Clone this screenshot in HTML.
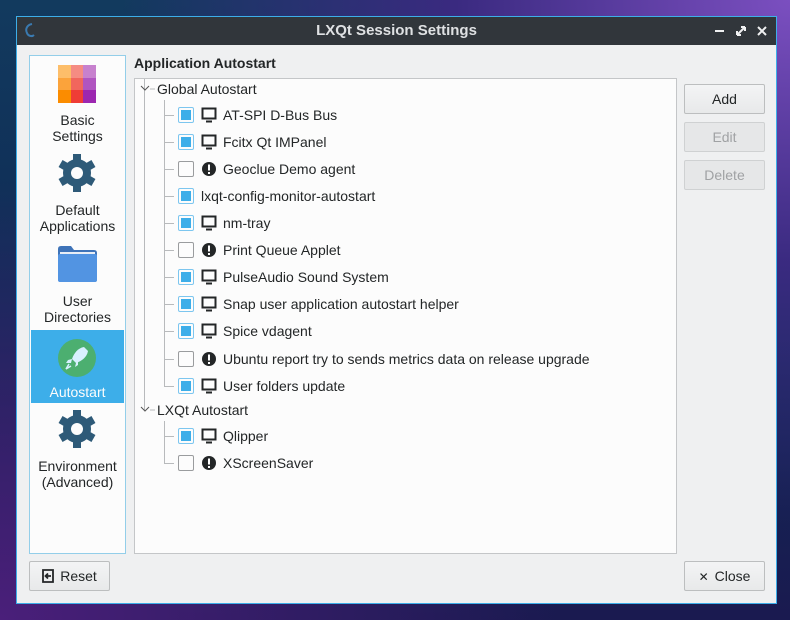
<!DOCTYPE html>
<html><head><meta charset="utf-8"><style>
*{margin:0;padding:0;box-sizing:border-box}
body{width:790px;height:620px;overflow:hidden;position:relative;font-family:"Liberation Sans","DejaVu Sans",sans-serif;font-size:14px;color:#232627;
background:radial-gradient(ellipse at 100% 0%,#7b4fc0 0%,#3a2a80 30%,transparent 60%),radial-gradient(ellipse at 0% 100%,#4a1f7a 0%,transparent 50%),linear-gradient(180deg,#123a5e 0%,#0f2a55 50%,#1a1a50 100%);}
.win{position:absolute;left:16px;top:16px;width:761px;height:588px;border:1px solid #3daee9;background:#eff0f1}
.tb{position:absolute;left:0;top:0;right:0;height:28px;background:#31363b;color:#dfe1e3;font-weight:bold;font-size:15px;text-align:center;line-height:28px}
.abs{position:absolute}
.side{left:12px;top:38px;width:97px;height:499px;background:#fcfcfc;border:1px solid #93cee9}
.item{position:absolute;left:0;width:95px;text-align:center;line-height:16px;font-size:14px}
.tree{left:117px;top:61px;width:543px;height:476px;background:#fcfcfc;border:1px solid #c4c6c8}
.btn{position:absolute;width:81px;height:30px;border:1px solid #bcbebf;border-radius:2px;background:linear-gradient(#f3f4f5,#e8e9ea);text-align:center;line-height:28px;font-size:14px}
.dis{color:#a0a2a4;background:#e6e7e8;border-color:#cfd1d2}
.row{position:absolute;height:20px;line-height:20px;white-space:nowrap}
.cb{position:absolute;width:16px;height:16px;border:1px solid #9a9c9e;border-radius:2px;background:#fcfcfc}
.cb.on{border-color:#7cc6ef;background:#fcfcfc}
.cb.on::after{content:"";position:absolute;left:2px;top:2px;width:10px;height:10px;background:#3daee9}
.ln{position:absolute;background:#b8babc}
</style></head><body>
<div class="win">
 <div class="tb">LXQt Session Settings
  <svg class="abs" style="left:6px;top:6px" width="14" height="16" viewBox="0 0 14 16"><path d="M9 1C4 2 2 6 4 10c1 3 5 4 7 2" stroke="#3a7ab0" stroke-width="2" fill="none"/></svg>
  <svg class="abs" style="left:696px;top:8px" width="60" height="12" viewBox="0 0 60 12"><path d="M2 6h9" stroke="#eff0f1" stroke-width="2"/><path d="M24 10l8-8M24 10v-4M24 10h4M32 2h-4M32 2v4" stroke="#eff0f1" stroke-width="2"/><path d="M45 2l8 8M53 2l-8 8" stroke="#eff0f1" stroke-width="2"/></svg>
 </div>
 <div class="abs side">
  <svg class="abs" style="left:28px;top:9px" width="38" height="38"><rect x="0" y="0" width="13" height="13" fill="#fdbe6a"/><rect x="13" y="0" width="12" height="13" fill="#f58c83"/><rect x="25" y="0" width="13" height="13" fill="#c781ce"/><rect x="0" y="13" width="13" height="12" fill="#fba33b"/><rect x="13" y="13" width="12" height="12" fill="#f1665d"/><rect x="25" y="13" width="13" height="12" fill="#b055c0"/><rect x="0" y="25" width="13" height="13" fill="#fb8c00"/><rect x="13" y="25" width="12" height="13" fill="#ef3d36"/><rect x="25" y="25" width="13" height="13" fill="#9c27b0"/></svg>
  <div class="item" style="top:56px">Basic<br>Settings</div>
  <svg class="abs" style="left:27px;top:97px" width="40" height="40" viewBox="-20 -20 40 40"><g fill="#2e5a78"><circle r="14"/><g id="t"><rect x="-4" y="-19" width="8" height="8"/></g><use href="#t" transform="rotate(60)"/><use href="#t" transform="rotate(120)"/><use href="#t" transform="rotate(180)"/><use href="#t" transform="rotate(240)"/><use href="#t" transform="rotate(300)"/></g><circle r="6" fill="#fcfcfc"/></svg>
  <div class="item" style="top:146px">Default<br>Applications</div>
  <svg class="abs" style="left:28px;top:190px" width="39" height="36"><path d="M0 3q0-3 3-3h10l3 4h20q3 0 3 3v26q0 3-3 3H3q-3 0-3-3z" fill="#3e73b8"/><rect x="0" y="8" width="39" height="28" rx="2" fill="#5294e2"/><rect x="2" y="6" width="35" height="2" fill="#e8eef6"/></svg>
  <div class="item" style="top:237px">User<br>Directories</div>
  <div class="abs" style="left:1px;top:274px;width:93px;height:73px;background:#3daee9"></div>
  <svg class="abs" style="left:27px;top:282px" width="40" height="40" viewBox="0 0 40 40"><circle cx="20" cy="20" r="19" fill="#4caf70"/><path d="M27 9c-6 1-10 6-12 12l4 4c6-2 11-6 12-12z" fill="#d8f0ff"/><path d="M15 21l-4 1-2 3 5 0zM19 25l-1 4 3-2 0-5z" fill="#d8f0ff"/><path d="M12 26l-3 5 5-3" stroke="#d8f0ff" stroke-width="1.5" fill="none"/></svg>
  <div class="item" style="top:328px;color:#fcfcfc">Autostart</div>
  <svg class="abs" style="left:27px;top:353px" width="40" height="40" viewBox="-20 -20 40 40"><g fill="#2e5a78"><circle r="14"/><use href="#t"/><use href="#t" transform="rotate(60)"/><use href="#t" transform="rotate(120)"/><use href="#t" transform="rotate(180)"/><use href="#t" transform="rotate(240)"/><use href="#t" transform="rotate(300)"/></g><circle r="6" fill="#fcfcfc"/></svg>
  <div class="item" style="top:402px">Environment<br>(Advanced)</div>
 </div>
 <div class="abs" style="left:117px;top:38px;font-weight:bold;font-size:14px">Application Autostart</div>
 <div class="abs tree"></div>
 <div class="btn" style="left:667px;top:67px">Add</div>
 <div class="btn dis" style="left:667px;top:105px">Edit</div>
 <div class="btn dis" style="left:667px;top:143px">Delete</div>
 <div class="btn" style="left:12px;top:544px"><svg style="vertical-align:-2px;margin-right:6px" width="12" height="14"><path d="M1 1h10v12H1zM9 7H4M6 4.5L3.5 7 6 9.5" stroke="#232627" stroke-width="1.8" fill="none"/></svg>Reset</div>
 <div class="btn" style="left:667px;top:544px"><span style="font-weight:bold;font-size:12px;margin-right:6px">✕</span>Close</div>
</div>
<div id="tree" class="abs" style="left:0;top:0"></div>
<script>
var rows=[[89,"Global Autostart",-1],[115,"AT-SPI D-Bus Bus",1,1],[142,"Fcitx Qt IMPanel",1,1],[169,"Geoclue Demo agent",0,2],[196,"lxqt-config-monitor-autostart",1,0],[223,"nm-tray",1,1],[250,"Print Queue Applet",0,2],[277,"PulseAudio Sound System",1,1],[304,"Snap user application autostart helper",1,1],[331,"Spice vdagent",1,1],[359,"Ubuntu report try to sends metrics data on release upgrade",0,2],[386,"User folders update",1,1],[410,"LXQt Autostart",-1],[436,"Qlipper",1,1],[463,"XScreenSaver",0,2]];
var h='<div class="ln" style="left:144px;top:79px;width:1px;height:331px"></div><div class="ln" style="left:164px;top:100px;width:1px;height:286px"></div><div class="ln" style="left:164px;top:421px;width:1px;height:42px"></div>';
rows.forEach(function(r){var y=r[0];
 if(r[2]<0){h+='<svg class="abs" style="left:140px;top:'+(y-4)+'px" width="16" height="8"><path d="M1 1l4 4 4-4" stroke="#555" fill="none"/><path d="M10 4h5" stroke="#b8babc"/></svg><div class="row" style="left:157px;top:'+(y-10)+'px">'+r[1]+'</div>';return;}
 h+='<div class="ln" style="left:164px;top:'+y+'px;width:10px;height:1px"></div>';
 h+='<div class="cb'+(r[2]?' on':'')+'" style="left:178px;top:'+(y-8)+'px"></div>';
 var x=201;
 if(r[3]==1){h+='<svg class="abs" style="left:201px;top:'+(y-8)+'px" width="16" height="16"><rect x="1.5" y="1.5" width="13" height="10" fill="none" stroke="#232627" stroke-width="2"/><path d="M5 14.5h6" stroke="#232627" stroke-width="2"/></svg>';x=223;}
 else if(r[3]==2){h+='<svg class="abs" style="left:201px;top:'+(y-8)+'px" width="16" height="16"><circle cx="8" cy="8" r="7" fill="#232627"/><rect x="7" y="3.5" width="2" height="6" fill="#fff"/><rect x="7" y="11" width="2" height="2" fill="#fff"/></svg>';x=223;}
 h+='<div class="row" style="left:'+x+'px;top:'+(y-10)+'px">'+r[1]+'</div>';
});
document.getElementById('tree').innerHTML=h;
</script>
</body></html>
